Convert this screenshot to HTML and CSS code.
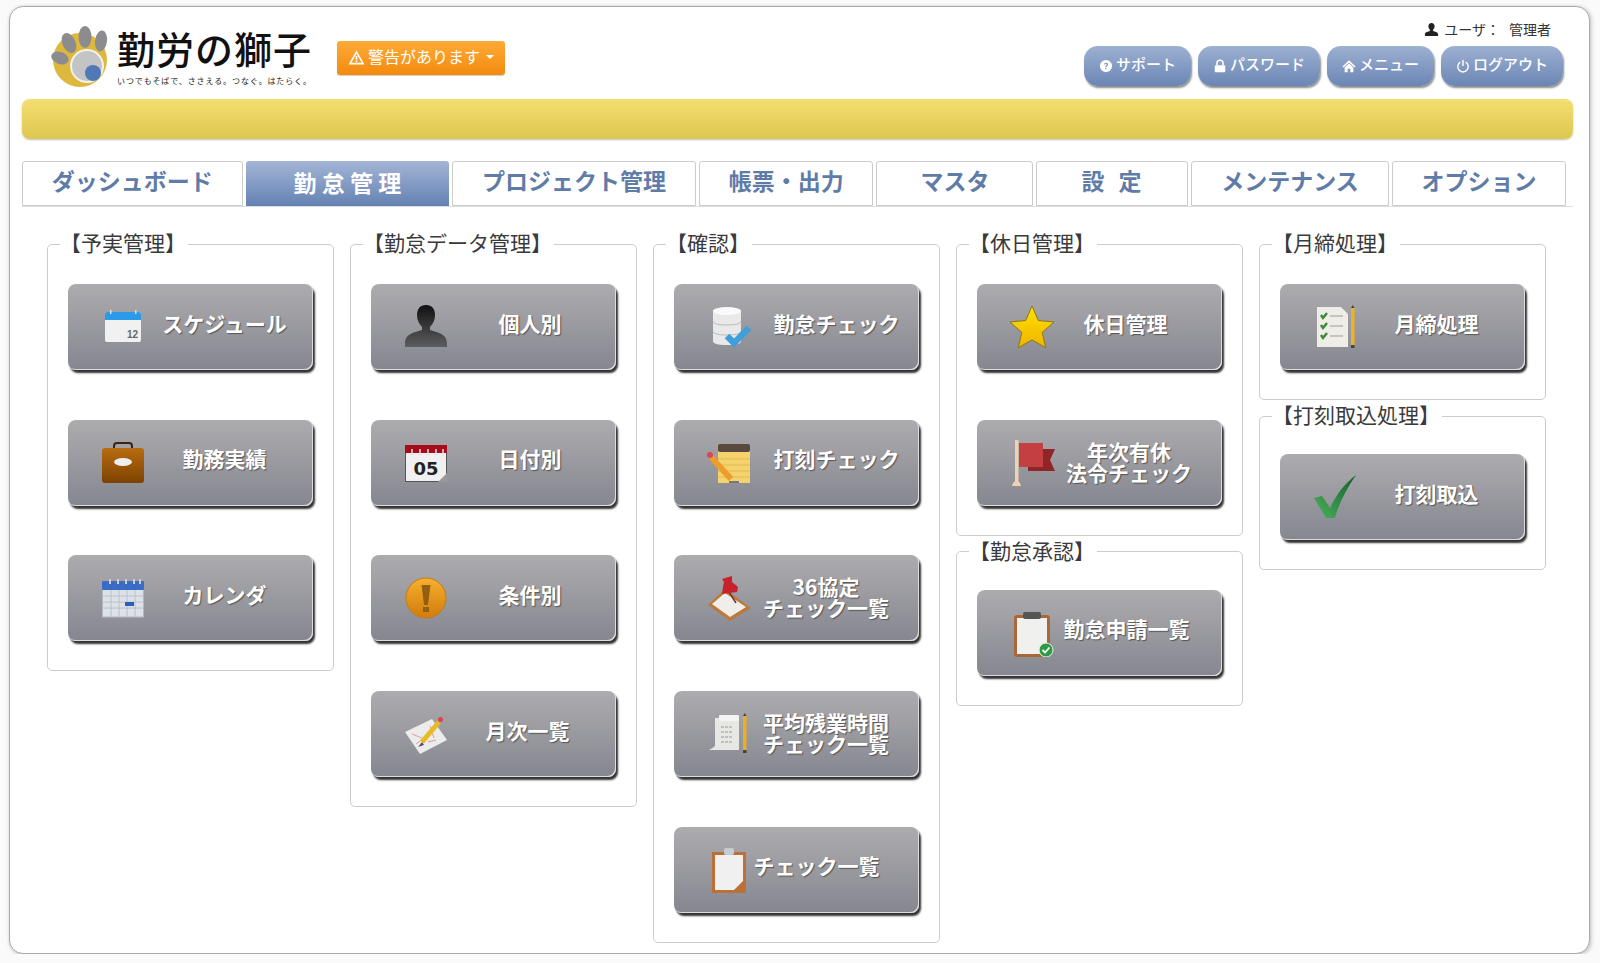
FILE: index.html
```html
<!DOCTYPE html>
<html lang="ja">
<head>
    <meta charset="UTF-8">
    <title>勤労の獅子</title>
    <link rel="stylesheet" href="styles.css">
</head>
<body>
    <svg class="defs" width="0" height="0">
        <defs>
            <linearGradient id="g-person" x1="0" y1="0" x2="0" y2="1"><stop offset="0" stop-color="#111"/><stop offset="1" stop-color="#5d5d60"/></linearGradient>
            <linearGradient id="g-bag" x1="0" y1="0" x2="0" y2="1"><stop offset="0" stop-color="#b86c12"/><stop offset="1" stop-color="#7c4200"/></linearGradient>
            <linearGradient id="g-alert" x1="0" y1="0" x2="0" y2="1"><stop offset="0" stop-color="#f7b02e"/><stop offset="1" stop-color="#d07c0c"/></linearGradient>
            <linearGradient id="g-star" x1="0" y1="0" x2="0" y2="1"><stop offset="0" stop-color="#ffe100"/><stop offset="1" stop-color="#f0b400"/></linearGradient>
            <linearGradient id="g-check" x1="1" y1="0" x2="0" y2="1"><stop offset="0" stop-color="#14602c"/><stop offset="1" stop-color="#4cb25e"/></linearGradient>
        </defs>
    </svg>

    <div class="page">
        <header class="header">
            <div class="logo">
                <svg class="logo-mark" viewBox="0 0 58 62">
                    <circle cx="29" cy="34" r="27" fill="#dcb93c"/>
                    <ellipse cx="34" cy="11" rx="6.500" ry="11" fill="#8c8c90"/>
                    <ellipse cx="50" cy="15" rx="6" ry="10.500" fill="#8c8c90" transform="rotate(8 50 15)"/>
                    <ellipse cx="18" cy="17" rx="6.500" ry="10.500" fill="#8c8c90" transform="rotate(-25 18 17)"/>
                    <ellipse cx="9" cy="32" rx="6" ry="9" fill="#8c8c90" transform="rotate(-70 9 32)"/>
                    <circle cx="36" cy="40" r="17" fill="#f1f1ee"/>
                    <circle cx="36" cy="40" r="15" fill="#c4c4c6"/>
                    <circle cx="42" cy="47" r="8" fill="#4f78b4"/>
                </svg>
                <div class="logo-text">
                    <div class="logo-title">勤労の獅子</div>
                    <div class="logo-tag">いつでもそばで、ささえる。つなぐ。はたらく。</div>
                </div>
            </div>
            <a class="warn-btn">
                <svg class="warn-icon" viewBox="0 0 16 16"><path d="M8 1.500 15.500 14.500H.5Z" fill="#fff"/><path d="M8 4.500 12.800 13H3.200Z" fill="#f79a20"/><rect x="7.200" y="6.500" width="1.600" height="3.600" fill="#fff"/><rect x="7.200" y="10.800" width="1.600" height="1.600" fill="#fff"/></svg>
                <span class="warn-text">警告があります</span>
                <span class="caret"></span>
            </a>
            <div class="header-right">
                <div class="user">
                    <svg class="user-icon" viewBox="0 0 16 16"><path d="M8 1c2.200 0 3.300 1.600 3.300 3.600 0 1.600-.7 3-1.600 3.700v1.200c2 .6 5.300 1.300 5.300 3.500V15H1v-2c0-2.200 3.300-2.900 5.300-3.500V8.300C5.400 7.600 4.700 6.200 4.700 4.600 4.700 2.600 5.800 1 8 1Z" fill="#222"/></svg>
                    <span>ユーザ：</span>
                    <span class="user-name">管理者</span>
                </div>
                <nav class="top-nav">
                    <a class="top-btn"><svg class="top-icon" viewBox="0 0 16 16"><circle cx="8" cy="8" r="7" fill="#fff"/><path d="M5.700 6.200C5.900 4.800 6.900 4.200 8.100 4.200c1.300 0 2.300.8 2.300 2 0 1.700-1.900 1.700-1.900 3.100H7.100c0-2.100 1.700-2 1.700-3.100 0-.5-.3-.8-.8-.8-.6 0-.9.4-1 .9Z" fill="#7d95bd"/><rect x="7.100" y="10.200" width="1.500" height="1.500" fill="#7d95bd"/></svg><span class="top-text">サポート</span></a>
                    <a class="top-btn"><svg class="top-icon" viewBox="0 0 16 16"><path d="M4.500 7V5a3.500 3.500 0 0 1 7 0v2" fill="none" stroke="#fff" stroke-width="1.800"/><rect x="2" y="7" width="12" height="8" rx="1" fill="#fff"/></svg><span class="top-text">パスワード</span></a>
                    <a class="top-btn"><svg class="top-icon" viewBox="0 0 16 16"><path d="M8 1.500 15.500 8.500 14.300 9.700 8 4 1.700 9.700.5 8.500Z" fill="#fff"/><path d="M3 9.700 8 5.200l5 4.500V15H9.500v-4h-3v4H3Z" fill="#fff"/></svg><span class="top-text">メニュー</span></a>
                    <a class="top-btn"><svg class="top-icon" viewBox="0 0 16 16"><path d="M5 3.600a6 6 0 1 0 6 0" fill="none" stroke="#fff" stroke-width="1.600"/><rect x="7.200" y="1" width="1.600" height="7" fill="#fff"/></svg><span class="top-text">ログアウト</span></a>
                </nav>
            </div>
        </header>

        <div class="notice-bar"></div>

        <nav class="tabs">
            <a class="tab">ダッシュボード</a>
            <a class="tab tab-active">勤 怠 管 理</a>
            <a class="tab">プロジェクト管理</a>
            <a class="tab">帳票・出力</a>
            <a class="tab tab-short">マスタ</a>
            <a class="tab tab-spaced">設定</a>
            <a class="tab">メンテナンス</a>
            <a class="tab">オプション</a>
        </nav>

        <main class="columns">
            <div class="column">
                <fieldset class="group">
                    <legend>【予実管理】</legend>
                    <a class="menu-btn">
                        <svg class="menu-icon" viewBox="0 0 48 48"><rect x="6" y="9" width="36" height="30" rx="2" fill="#f1f1f1"/><path d="M6 17v-6a2 2 0 0 1 2-2h32a2 2 0 0 1 2 2v6Z" fill="#2b9ae8"/><rect x="11" y="7" width="1.500" height="4" fill="#ddd"/><rect x="36" y="7" width="1.500" height="4" fill="#ddd"/><text x="28" y="35" font-family="Liberation Sans, sans-serif" font-size="10" font-weight="700" fill="#666">12</text></svg>
                        <span class="menu-label">スケジュール</span>
                    </a>
                    <a class="menu-btn">
                        <svg class="menu-icon" viewBox="0 0 48 48"><path d="M15 11V7q0-3 3-3h12q3 0 3 3v4" fill="none" stroke="#3a2610" stroke-width="2"/><rect x="3" y="9" width="42" height="35" rx="3" fill="url(#g-bag)"/><ellipse cx="24" cy="23" rx="9" ry="4" fill="#eee"/></svg>
                        <span class="menu-label">勤務実績</span>
                    </a>
                    <a class="menu-btn">
                        <svg class="menu-icon" viewBox="0 0 48 48"><rect x="3.500" y="8" width="41" height="35" fill="#dde1e8" stroke="#b5b8c0"/><rect x="3" y="7" width="42" height="9" rx="1" fill="#3a6cc6"/><path d="M11 5v5M19 5v5M27 5v5M35 5v5M41 5v5" stroke="#ccd" stroke-width="2"/><path d="M4 22h40M4 28h40M4 34h40M12 16v27M20 16v27M28 16v27M36 16v27" stroke="#bcc0c8"/><rect x="26" y="28" width="9" height="4" fill="#2c5fb8"/></svg>
                        <span class="menu-label">カレンダ</span>
                    </a>
                </fieldset>
            </div>

            <div class="column">
                <fieldset class="group">
                    <legend>【勤怠データ管理】</legend>
                    <a class="menu-btn">
                        <svg class="menu-icon" viewBox="0 0 48 48"><path d="M24 2c6 0 9 4 9 10 0 5-2 9-5 12v3c5 2 17 3 17 13v4H3v-4c0-10 12-11 17-13v-3c-3-3-5-7-5-12C15 6 18 2 24 2Z" fill="url(#g-person)"/></svg>
                        <span class="menu-label shift-xs">個人別</span>
                    </a>
                    <a class="menu-btn">
                        <svg class="menu-icon" viewBox="0 0 48 48"><rect x="3.500" y="6.500" width="41" height="36" fill="#f0f0f0" stroke="#555"/><rect x="3" y="6" width="42" height="8" fill="#a80a1c"/><path d="M10 10v6M18 10v6M26 10v6M34 10v6M41 10v6" stroke="#ddd" stroke-width="1.500"/><text x="24" y="36" text-anchor="middle" font-family="DejaVu Sans, sans-serif" font-size="18" font-weight="700" fill="#222">05</text><path d="M45 34 36 43h9Z" fill="#999"/></svg>
                        <span class="menu-label shift-xs">日付別</span>
                    </a>
                    <a class="menu-btn">
                        <svg class="menu-icon" viewBox="0 0 48 48"><circle cx="24" cy="24" r="20" fill="url(#g-alert)" stroke="#c97b10"/><path d="M19.500 11h9l-2.500 20h-4Z" fill="#94600f"/><rect x="21" y="33" width="6" height="5" fill="#94600f"/></svg>
                        <span class="menu-label shift-xs">条件別</span>
                    </a>
                    <a class="menu-btn">
                        <svg class="menu-icon" viewBox="0 0 48 48"><path d="M3 22 30 9l15 21-27 14Z" fill="#ececec"/><path d="M10 24l10 4M14 34l8-6M28 16l4 12M34 30l-8 2" stroke="#e29a9a"/><path d="M20 32 37 12" stroke="#e8bb24" stroke-width="5"/><path d="M20 32l-4 5 6-2Z" fill="#555"/><circle cx="38.500" cy="9.500" r="2.500" fill="#dd4455"/></svg>
                        <span class="menu-label">月次一覧</span>
                    </a>
                </fieldset>
            </div>

            <div class="column">
                <fieldset class="group">
                    <legend>【確認】</legend>
                    <a class="menu-btn">
                        <svg class="menu-icon" viewBox="0 0 48 48"><path d="M8 8v30q0 4 14 4t14-4V8Z" fill="#e9e9e9"/><ellipse cx="22" cy="8" rx="14" ry="4" fill="#fafafa"/><path d="M8 18q0 4 14 4t14-4M8 28q0 4 14 4t14-4" fill="none" stroke="#bbb"/><path d="M22 33l7 7 15-15" fill="none" stroke="#3f9fdb" stroke-width="6.500"/></svg>
                        <span class="menu-label shift-r">勤怠チェック</span>
                    </a>
                    <a class="menu-btn">
                        <svg class="menu-icon" viewBox="0 0 48 48"><rect x="13" y="6" width="32" height="38" fill="#f4d36e"/><path d="M13 20h32M13 26h32M13 32h32M13 38h32" stroke="#e0b94c"/><rect x="13" y="5" width="32" height="8" rx="2" fill="#5a4a3e"/><path d="M6 18 26 40" stroke="#ee9c2e" stroke-width="6"/><circle cx="5" cy="16" r="3" fill="#d9485a"/><path d="M24 43h10" stroke="#777" stroke-width="2"/></svg>
                        <span class="menu-label shift-r">打刻チェック</span>
                    </a>
                    <a class="menu-btn">
                        <svg class="menu-icon" viewBox="0 0 48 48"><path d="M3 31 20 15l26 19-21 13Z" fill="#bb7a3c"/><path d="M7 30 20 19l21 14-16 10Z" fill="#f0eeea"/><path d="M24 18l7 11" stroke="#733" stroke-width="1.500"/><path d="M17 5 27 2v6l6 5-1 5-15 2 1-7 1-5Z" fill="#c8202c"/></svg>
                        <span class="menu-label shift-l two-line">36協定<br>チェック一覧</span>
                    </a>
                    <a class="menu-btn">
                        <svg class="menu-icon" viewBox="0 0 48 48"><path d="M10 8h24v32H4q4-2 6-4Z" fill="#e7e7e3"/><rect x="14" y="5" width="20" height="6" rx="1" fill="#f4f4f2"/><path d="M16 17h12M16 22h12M16 27h12M16 32h12" stroke="#999" stroke-dasharray="3 1"/><rect x="38" y="6" width="3.500" height="34" fill="#eab022"/><path d="M38 6l1.700-3 1.800 3Z" fill="#444"/><rect x="38" y="40" width="3.500" height="3" fill="#444"/></svg>
                        <span class="menu-label shift-l two-line">平均残業時間<br>チェック一覧</span>
                    </a>
                    <a class="menu-btn">
                        <svg class="menu-icon" viewBox="0 0 48 48"><rect x="7" y="6" width="34" height="41" fill="#bd7035"/><rect x="10" y="9" width="28" height="35" fill="#f0f0f0"/><path d="M38 35v9H29Z" fill="#bd7035"/><rect x="19" y="2" width="10" height="7" rx="2" fill="#c4ccd2"/></svg>
                        <span class="menu-label shift-ll">チェック一覧</span>
                    </a>
                </fieldset>
            </div>

            <div class="column">
                <fieldset class="group">
                    <legend>【休日管理】</legend>
                    <a class="menu-btn">
                        <svg class="menu-icon" viewBox="0 0 48 48"><path d="M24 3l6.300 14.500 15.700 1.500-11.800 10.400 3.500 15.400L24 36.800l-13.700 8 3.500-15.400L2 19l15.700-1.500Z" fill="url(#g-star)" stroke="#8d7a10"/></svg>
                        <span class="menu-label shift-m">休日管理</span>
                    </a>
                    <a class="menu-btn">
                        <svg class="menu-icon" viewBox="0 0 48 48"><path d="M32 10H47L42 21l5 11H20V28H32Z" fill="#8f2528"/><rect x="11" y="4" width="24" height="24" fill="#c43f41"/><rect x="7" y="1" width="3.500" height="43" fill="#ecd3b4"/><path d="M4 47q1-5 4.500-5T13 47Z" fill="#ecd3b4"/></svg>
                        <span class="menu-label shift-l two-line">年次有休<br>法令チェック</span>
                    </a>
                </fieldset>
                <fieldset class="group">
                    <legend>【勤怠承認】</legend>
                    <a class="menu-btn">
                        <svg class="menu-icon" viewBox="0 0 48 48"><rect x="6" y="6" width="36" height="42" rx="3" fill="#a9683a"/><rect x="9" y="9" width="30" height="36" fill="#f0f0ee"/><rect x="15" y="3" width="18" height="7" rx="2" fill="#555"/><circle cx="38" cy="41" r="7" fill="#2f9a44" stroke="#e7f5e7"/><path d="M34.500 41l2.500 2.500 4.500-5" fill="none" stroke="#fff" stroke-width="1.800"/></svg>
                        <span class="menu-label shift-ml">勤怠申請一覧</span>
                    </a>
                </fieldset>
            </div>

            <div class="column">
                <fieldset class="group">
                    <legend>【月締処理】</legend>
                    <a class="menu-btn">
                        <svg class="menu-icon" viewBox="0 0 48 48"><path d="M6 4h24l7 7v33H6Z" fill="#eeeee6"/><path d="M10 12l2 3 4-5M10 22l2 3 4-5M10 32l2 3 4-5" fill="none" stroke="#3d8a3c" stroke-width="2.500"/><path d="M19 13h13M19 23h13M19 33h13" stroke="#999"/><rect x="40" y="5" width="3.500" height="38" fill="#eeb420"/><path d="M40 5l1.700-3 1.800 3Z" fill="#444"/><rect x="40" y="42" width="3.500" height="3" fill="#444"/></svg>
                        <span class="menu-label">月締処理</span>
                    </a>
                </fieldset>
                <fieldset class="group">
                    <legend>【打刻取込処理】</legend>
                    <a class="menu-btn">
                        <svg class="menu-icon" viewBox="0 0 48 48"><path d="M3 25l8-2 8 12C25 22 33 11 45 2c-9 13-17 28-21 43h-9Z" fill="url(#g-check)"/></svg>
                        <span class="menu-label">打刻取込</span>
                    </a>
                </fieldset>
            </div>
        </main>
    </div>
</body>
</html>
```

FILE: styles.css
```css
* {
    box-sizing: border-box;
}

body {
    margin: 0;
    background: #fafafa;
    font-family: "Noto Sans CJK JP", "Liberation Sans", sans-serif;
    color: #333;
}

.defs {
    position: absolute;
}

.page {
    margin: 6px 10px 0 9px;
    height: 948px;
    padding: 0 16px 0 12px;
    background: #fff;
    border: 1px solid #aaa;
    border-radius: 14px;
    box-shadow: 1px 1px 4px rgba(0, 0, 0, 0.25);
}

.header {
    display: flex;
    align-items: flex-start;
    height: 92px;
    padding-left: 29px;
}

.logo {
    display: flex;
    gap: 8px;
    padding-top: 19px;
}

.logo-mark {
    width: 58px;
    height: 62px;
}

.logo-title {
    font-size: 38px;
    font-weight: 500;
    line-height: 44px;
    letter-spacing: 1px;
    color: #111;
    white-space: nowrap;
}

.logo-tag {
    font-size: 8px;
    line-height: 12px;
    margin-top: 5px;
    letter-spacing: 0.9px;
    color: #222;
    white-space: nowrap;
}

.warn-btn {
    display: flex;
    align-items: center;
    gap: 3px;
    height: 34px;
    margin: 34px 0 0 25px;
    padding: 0 11px;
    color: #fff;
    font-size: 16px;
    white-space: nowrap;
    background: linear-gradient(#ffab38, #f38a0e);
    border-radius: 3px;
    box-shadow: 0 1px 1px rgba(0, 0, 0, 0.2);
}

.warn-text {
    padding-bottom: 5px;
}

.warn-icon {
    width: 17px;
    height: 17px;
    margin-bottom: 2px;
}

.caret {
    margin: 0 0 2px 3px;
    border-top: 4px solid #fff;
    border-left: 4px solid transparent;
    border-right: 4px solid transparent;
}

.header-right {
    margin-left: auto;
    padding: 14px 10px 0 0;
}

.user {
    display: flex;
    align-items: center;
    justify-content: flex-end;
    gap: 5px;
    height: 16px;
    padding-right: 12px;
    font-size: 14px;
    color: #333;
}

.user-name {
    margin-left: 4px;
}

.user-icon {
    width: 15px;
    height: 15px;
}

.top-nav {
    display: flex;
    gap: 7px;
    margin-top: 9px;
}

.top-btn {
    display: flex;
    align-items: center;
    gap: 3px;
    height: 40px;
    padding: 0 15px;
    color: #fff;
    font-size: 15px;
    font-weight: 500;
    white-space: nowrap;
    background: linear-gradient(#9db0d2, #6b86b4);
    border-radius: 14px;
    box-shadow: 1px 2px 2px rgba(0, 0, 0, 0.45);
}

.top-text {
    padding-bottom: 5px;
}

.top-icon {
    width: 14px;
    height: 14px;
    margin-bottom: 1px;
}

.notice-bar {
    height: 40px;
    background: linear-gradient(#f3de70, #dfc650);
    border-radius: 8px;
    box-shadow: 0 1px 2px rgba(0, 0, 0, 0.25);
}

.tabs {
    display: flex;
    gap: 3px;
    margin-top: 22px;
    border-bottom: 1px solid #ddd;
}

.tab {
    flex-shrink: 0;
    height: 45px;
    padding: 0 28.8px;
    font-size: 23px;
    font-weight: 700;
    line-height: 36px;
    color: #5f7ca8;
    white-space: nowrap;
    background: #fff;
    border: 1px solid #ccc;
    border-radius: 3px 3px 0 0;
}

.tab-short {
    padding: 0 43px;
}

.tab-spaced {
    padding: 0 32px 0 44px;
    letter-spacing: 14px;
}

.tab-active {
    padding: 0 48px;
    line-height: 42px;
    color: #fff;
    background: linear-gradient(#a3b5d6, #6582b2);
    border: none;
}

.columns {
    display: flex;
    gap: 17px;
    margin-top: 22px;
    padding-left: 25px;
}

.column {
    display: flex;
    flex-direction: column;
    gap: 1px;
    width: 286px;
}

.group {
    margin: 0;
    padding: 25px 20px 29px;
    border: 1px solid #ccc;
    border-radius: 5px;
}

.group + .group {
    padding-top: 23px;
}

.group legend {
    margin-left: -8px;
    padding: 0 2px 4px 0;
    font-size: 21px;
    line-height: 26px;
    color: #3a3a3a;
}

.menu-btn {
    display: flex;
    align-items: center;
    height: 86px;
    margin-bottom: 49.7px;
    padding-left: 27px;
    width: 245px;
    background: linear-gradient(#acacaf, #868690);
    border-radius: 8px;
    box-shadow: inset -1px -1px 0 #ddd, 2px 3px 2px #333;
}

.menu-btn:last-child {
    margin-bottom: 0;
}

.menu-icon {
    flex-shrink: 0;
    width: 48px;
    height: 48px;
    margin: 0 4px;
}

.menu-label {
    flex: 1;
    margin-left: -15px;
    padding-bottom: 8px;
    color: #fff;
    font-size: 21px;
    font-weight: 700;
    line-height: 21px;
    text-align: center;
    white-space: nowrap;
    text-shadow: 1px 1px 1px #555;
}

.two-line {
    padding-bottom: 2px;
}

.shift-xs {
    padding-left: 5px;
}

.shift-r {
    padding-left: 12px;
}

.shift-l {
    padding-right: 9px;
}

.shift-m {
    padding-right: 16px;
}

.shift-ml {
    padding-right: 14px;
}

.shift-ll {
    padding-right: 28px;
}
```
